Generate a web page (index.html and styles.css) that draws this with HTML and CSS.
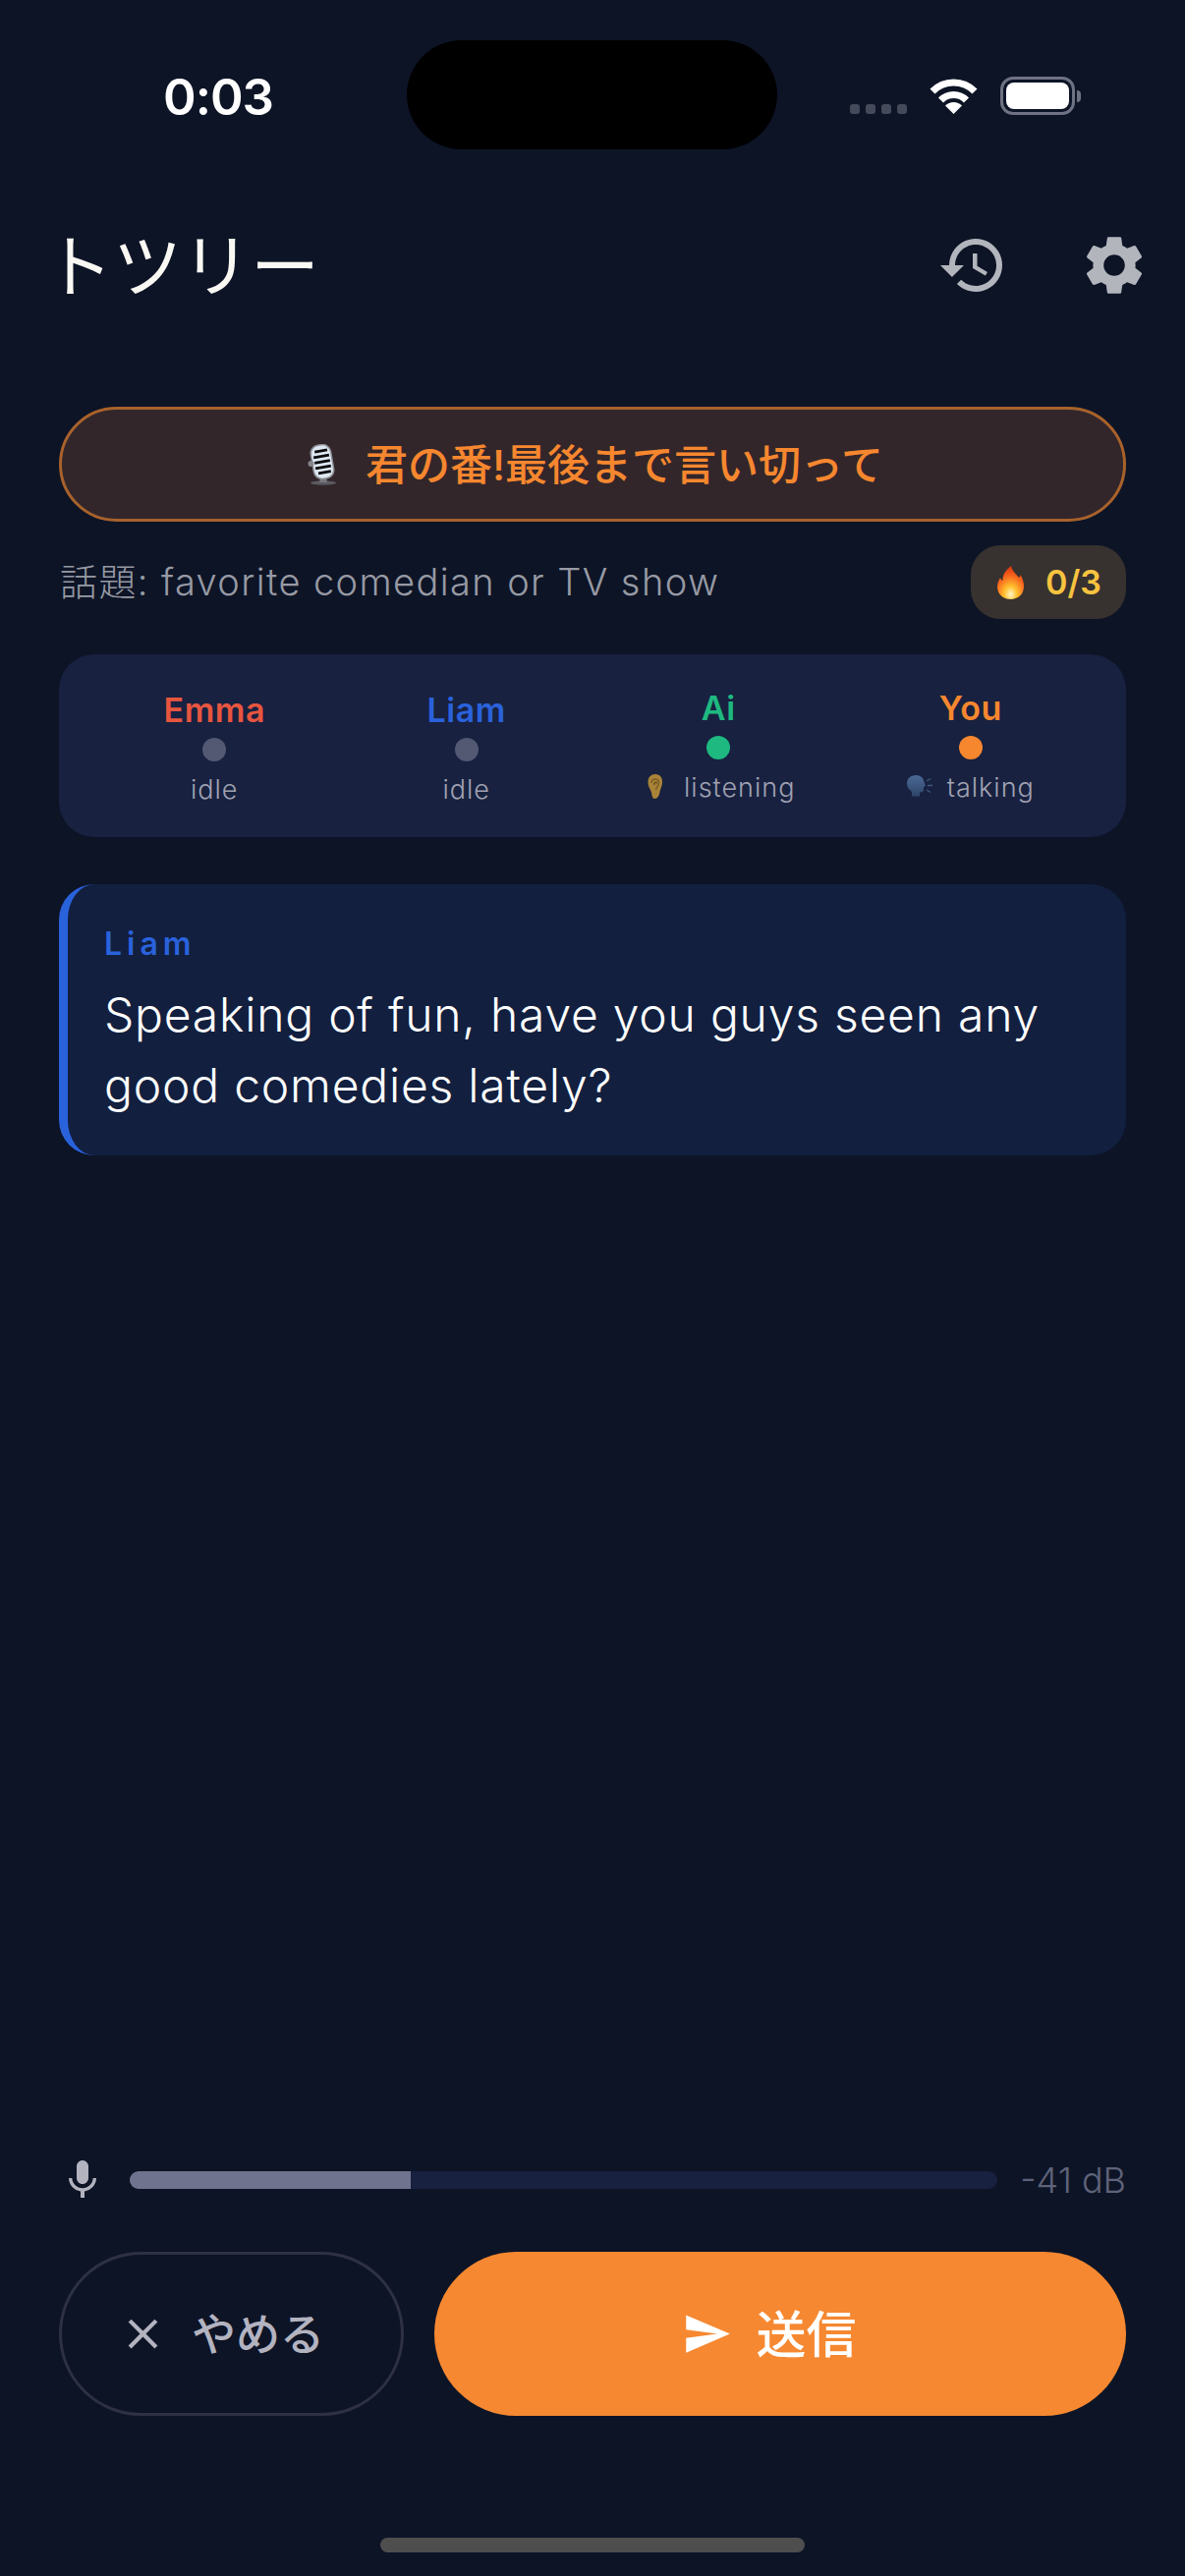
FILE: index.html
```html
<!DOCTYPE html>
<html lang="ja">
<head>
  <meta charset="UTF-8" />
  <title>トツリー</title>
  <link rel="stylesheet" href="styles.css">
</head>
<body>
  <div class="screen">
    <!-- Status bar -->
    <div class="status-bar">
      <div class="status-time">0:03</div>
      <div class="island"></div>
      <div class="status-icons">
        <div class="signal"><span></span><span></span><span></span><span></span></div>
        <svg class="wifi" viewBox="0 0 51 37">
          <path d="M4 14A30 30 0 0 1 47 14" fill="none" stroke="#fff" stroke-width="7"/>
          <path d="M12.5 23A18 18 0 0 1 38.5 23" fill="none" stroke="#fff" stroke-width="7"/>
          <path d="M25.5 37L17 28.5A12 12 0 0 1 34 28.5z" fill="#fff"/>
        </svg>
        <div class="battery"><div class="battery-level"></div></div>
        <div class="battery-cap"></div>
      </div>
    </div>

    <!-- Header -->
    <div class="app-header">
      <div class="app-title">トツリー</div>
      <div class="header-actions">
        <svg class="header-icon" viewBox="0 0 24 24"><path d="M13 3c-4.97 0-9 4.03-9 9H1l3.89 3.89.07.14L9 12H6c0-3.87 3.13-7 7-7s7 3.13 7 7-3.13 7-7 7c-1.93 0-3.68-.79-4.94-2.06l-1.42 1.42C8.27 19.99 10.51 21 13 21c4.97 0 9-4.03 9-9s-4.03-9-9-9zm-1 5v5l4.28 2.54.72-1.21-3.5-2.08V8H12z"/></svg>
        <svg class="header-icon" viewBox="0 0 24 24"><path d="M19.14 12.94c.04-.3.06-.61.06-.94 0-.32-.02-.64-.07-.94l2.03-1.58c.18-.14.23-.41.12-.61l-1.92-3.32c-.12-.22-.37-.29-.59-.22l-2.39.96c-.5-.38-1.03-.7-1.62-.94l-.36-2.54c-.04-.24-.24-.41-.48-.41h-3.84c-.24 0-.43.17-.47.41l-.36 2.54c-.59.24-1.13.57-1.62.94l-2.39-.96c-.22-.08-.47 0-.59.22L2.74 8.87c-.12.21-.08.47.12.61l2.03 1.58c-.05.3-.09.63-.09.94s.02.64.07.94l-2.03 1.58c-.18.14-.23.41-.12.61l1.92 3.32c.12.22.37.29.59.22l2.39-.96c.5.38 1.03.7 1.62.94l.36 2.54c.05.24.24.41.48.41h3.84c.24 0 .44-.17.47-.41l.36-2.54c.59-.24 1.13-.56 1.62-.94l2.39.96c.22.08.47 0 .59-.22l1.92-3.32c.12-.22.07-.47-.12-.61l-2.01-1.58zM12 15.6c-1.98 0-3.6-1.62-3.6-3.6s1.62-3.6 3.6-3.6 3.6 1.62 3.6 3.6-1.62 3.6-3.6 3.6z"/></svg>
      </div>
    </div>

    <div class="content">
      <div class="turn-banner">
        <svg class="mic-emoji" viewBox="0 0 29 42">
          <ellipse cx="16" cy="39.5" rx="13" ry="2.2" fill="#5a5a60"/>
          <path d="M13 34l-1 5h8l-1-5z" fill="#77777c"/>
          <g transform="rotate(-10 15 18)">
            <rect x="4" y="0" width="22" height="36" rx="9" fill="#8c9096"/>
            <rect x="5.500" y="1.500" width="19" height="33" rx="8" fill="#dfe8f2"/>
            <path d="M9 7h13M7 12.500h16M7 18h16M7 23.500h16M9 29h13" stroke="#0b0b0e" stroke-width="2.800"/>
          </g>
          <circle cx="3.500" cy="20" r="3" fill="#84868c"/>
        </svg>
        <span>君の番!最後まで言い切って</span>
      </div>

      <div class="topic-row">
        <div class="topic">話題: favorite comedian or TV show</div>
        <div class="streak">
          <svg class="flame" viewBox="0 0 27 34">
            <defs>
              <radialGradient id="flameFill" cx="0.5" cy="0.85" r="0.8">
                <stop offset="0" stop-color="#fff6c8"/>
                <stop offset="0.3" stop-color="#ffc02e"/>
                <stop offset="0.7" stop-color="#f8641c"/>
                <stop offset="1" stop-color="#dd3a12"/>
              </radialGradient>
            </defs>
            <path d="M14 0c1 5 5 8 8 12 1-1 1.500-2 1.500-3 2.500 4 3.500 8 3.500 12 0 8-6 13-13.500 13S0 29 0 21c0-4 2-7 3-9 .5 1.500 1 2.500 2.500 3C5 9 9 4 14 0z" fill="url(#flameFill)"/>
          </svg>
          <span>0/3</span>
        </div>
      </div>

      <div class="players">
        <div class="player">
          <div class="player-name emma">Emma</div>
          <div class="dot"></div>
          <div class="player-state">idle</div>
        </div>
        <div class="player">
          <div class="player-name liam">Liam</div>
          <div class="dot"></div>
          <div class="player-state">idle</div>
        </div>
        <div class="player active">
          <div class="player-name ai">Ai</div>
          <div class="dot dot-ai"></div>
          <div class="player-state listening">
            <svg class="state-emoji ear" viewBox="0 0 16 25">
              <path d="M8 0C13 0 15.500 4 15 9 14.500 13 13 15 12.500 18 12 22 10 25 7.500 25 5 25 4.500 22 4 19 3.500 16 .5 13 .5 8 .5 3 3.500 0 8 0z" fill="#a98338"/>
              <path d="M4 9C4 4 11 3.500 11.500 8.500 11.500 12 9 13 8.500 16" fill="none" stroke="#7a5c22" stroke-width="1.400"/>
              <path d="M6.500 11C6.500 8 9 7.500 9.500 9.500" fill="none" stroke="#6b4e1b" stroke-width="1.400"/>
            </svg>
            <span>listening</span>
          </div>
        </div>
        <div class="player active">
          <div class="player-name you">You</div>
          <div class="dot dot-you"></div>
          <div class="player-state">
            <svg class="state-emoji head" viewBox="0 0 26 22">
              <defs>
                <linearGradient id="headFill" x1="0" y1="0" x2="0" y2="1">
                  <stop offset="0" stop-color="#4b6a96"/>
                  <stop offset="1" stop-color="#2f4468"/>
                </linearGradient>
              </defs>
              <path d="M9 0C14 0 17 3 17.500 7L19 11 17 12V15C17 17 15 17.500 13 17.500V21.500H5V17C2 15 0 12 0 8.500 0 3.500 4 0 9 0z" fill="url(#headFill)"/>
              <path d="M20 6l4-2.500M21 10.500h5M20 15l4 2.500" stroke="#41597f" stroke-width="1.400"/>
            </svg>
            <span>talking</span>
          </div>
        </div>
      </div>

      <div class="message">
        <div class="message-author">Liam</div>
        <div class="message-text">Speaking of fun, have you guys seen any good comedies lately?</div>
      </div>
    </div>

    <!-- Footer controls -->
    <div class="controls">
      <div class="meter-row">
        <svg class="meter-mic" viewBox="0 0 24 24"><path d="M12 14c1.660 0 2.990-1.340 2.990-3L15 5c0-1.660-1.340-3-3-3S9 3.340 9 5v6c0 1.660 1.340 3 3 3zm5.300-3c0 3-2.540 5.100-5.300 5.100S6.700 14 6.700 11H5c0 3.410 2.720 6.230 6 6.720V21h2v-3.280c3.280-.48 6-3.300 6-6.720h-1.700z"/></svg>
        <div class="meter"><div class="meter-fill" style="width: 32.4%"></div></div>
        <div class="meter-value">-41 dB</div>
      </div>
      <div class="buttons">
        <button class="btn-cancel">
          <svg viewBox="0 0 24 24"><path d="M19 6.410L17.590 5 12 10.590 6.410 5 5 6.410 10.590 12 5 17.590 6.410 19 12 13.410 17.590 19 19 17.590 13.410 12z"/></svg>
          <span>やめる</span>
        </button>
        <button class="btn-send">
          <svg viewBox="0 0 24 24"><path d="M2.010 21L23 12 2.010 3 2 10l15 2-15 2z"/></svg>
          <span>送信</span>
        </button>
      </div>
    </div>

    <div class="home-bar"></div>
  </div>
</body>
</html>
```

FILE: styles.css
```css
* {
  box-sizing: border-box;
}
body {
  margin: 0;
  background-color: #0d1426;
  font-family: Inter, "Noto Sans CJK JP", sans-serif;
  color: #fff;
}
.screen {
  width: 1206px;
  height: 2622px;
  display: flex;
  flex-direction: column;
  overflow: hidden;
}

/* Status bar */
.status-bar {
  display: flex;
  padding-top: 41px;
  height: 152px;
}
.status-time {
  width: 414px;
  padding: 2px 0 0 30px;
  text-align: center;
  font-size: 51px;
  font-weight: 600;
  line-height: 111px;
  letter-spacing: -1px;
}
.island {
  width: 377px;
  height: 111px;
  background: #000;
  border-radius: 56px;
}
.status-icons {
  flex: 1;
  display: flex;
  align-items: flex-start;
  padding-left: 74px;
}
.signal {
  display: flex;
  gap: 6px;
  margin-top: 65px;
}
.signal span {
  width: 10px;
  height: 10px;
  border-radius: 3px;
  background: #454a5b;
}
.wifi {
  width: 51px;
  height: 37px;
  margin: 38px 0 0 22px;
}
.battery {
  width: 76px;
  height: 39px;
  margin: 37px 0 0 22px;
  padding: 3px;
  border: 3px solid #6f7282;
  border-radius: 13px;
}
.battery-level {
  height: 100%;
  background: #fff;
  border-radius: 8px;
}
.battery-cap {
  width: 4px;
  height: 12px;
  margin: 51px 0 0 2px;
  background: #6f7282;
  border-radius: 0 4px 4px 0;
}

/* Header */
.app-header {
  display: flex;
  justify-content: space-between;
  align-items: center;
  margin-top: 82px;
  height: 72px;
  padding: 0 36px 0 45px;
}
.app-title {
  margin-top: -8px;
  font-size: 70px;
  font-weight: 400;
  color: #faf8f3;
}
.header-actions {
  display: flex;
  gap: 72px;
}
.header-icon {
  width: 72px;
  height: 72px;
  fill: #b3b5bd;
}

/* Main content */
.content {
  padding: 0 60px;
}
.turn-banner {
  display: flex;
  align-items: center;
  justify-content: center;
  gap: 30px;
  margin-top: 108px;
  height: 117px;
  padding: 0 0 5px 6px;
  background: #32262b;
  border: 3px solid #a8622b;
  border-radius: 60px;
  color: #f6872f;
  font-size: 43px;
  font-weight: 500;
}
.mic-emoji {
  width: 29px;
  height: 42px;
  margin-top: 5px;
}
.topic-row {
  display: flex;
  justify-content: space-between;
  align-items: center;
  margin-top: 24px;
  height: 75px;
}
.topic {
  margin: -6px 0 0 1px;
  font-size: 38px;
  font-weight: 300;
  letter-spacing: 1.4px;
  color: #979aa4;
}
.streak {
  display: flex;
  align-items: center;
  gap: 22px;
  width: 158px;
  height: 75px;
  padding-left: 27px;
  background: #37322f;
  border-radius: 30px;
  color: #f8c340;
  font-size: 34px;
  font-weight: 600;
}
.flame {
  width: 27px;
  height: 34px;
}
.players {
  display: grid;
  grid-template-columns: repeat(4, 1fr);
  margin-top: 36px;
  height: 186px;
  padding: 35px 30px 0;
  background: #182140;
  border-radius: 36px;
}
.player {
  display: flex;
  flex-direction: column;
  align-items: center;
}
.player.active {
  margin-top: -2px;
}
.player-name {
  font-size: 34px;
  font-weight: 600;
  letter-spacing: 0.5px;
  line-height: 44px;
}
.emma { color: #e8553f; }
.liam { color: #2a62dc; }
.ai { color: #1eb980; }
.you { color: #f6872f; }
.dot {
  width: 24px;
  height: 24px;
  margin-top: 6px;
  border-radius: 50%;
  background: #535873;
}
.dot-ai { background: #1eb980; }
.dot-you { background: #f6872f; }
.player-state {
  display: flex;
  align-items: center;
  gap: 15px;
  margin-top: 6px;
  font-size: 27px;
  font-weight: 300;
  line-height: 46px;
  letter-spacing: 1px;
  color: #a0a2b2;
}
.listening {
  gap: 21px;
  padding-left: 6px;
}
.state-emoji {
  margin-top: -4px;
}
.ear {
  width: 16px;
  height: 25px;
}
.head {
  width: 26px;
  height: 22px;
}
.message {
  margin-top: 48px;
  height: 276px;
  padding: 41px 40px 0 37px;
  background: #121f3f;
  border-left: 9px solid #2a62dc;
  border-radius: 36px;
}
.message-author {
  font-size: 32px;
  font-weight: 600;
  letter-spacing: 5px;
  line-height: 40px;
  color: #2a62dc;
}
.message-text {
  margin-top: 16px;
  font-size: 48px;
  font-weight: 350;
  line-height: 72px;
  letter-spacing: 0.78px;
  color: #fff;
}

/* Footer controls */
.controls {
  margin-top: auto;
  padding: 0 60px;
}
.meter-row {
  display: flex;
  align-items: center;
  height: 48px;
}
.meter-mic {
  width: 48px;
  height: 48px;
  flex-shrink: 0;
  fill: #b3b3c0;
}
.meter {
  flex: 1;
  height: 18px;
  margin-left: 24px;
  background: #18213f;
  border-radius: 9px;
  overflow: hidden;
}
.meter-fill {
  height: 100%;
  background: #70738e;
}
.meter-value {
  width: 131px;
  text-align: right;
  font-size: 36px;
  font-weight: 300;
  color: #5f637a;
}
.buttons {
  display: flex;
  gap: 31px;
  margin-top: 49px;
}
.buttons button {
  display: flex;
  align-items: center;
  height: 167px;
  border-radius: 84px;
  font-family: inherit;
  cursor: pointer;
}
.btn-cancel {
  width: 351px;
  gap: 24px;
  padding: 0 0 0 57px;
  background: transparent;
  border: 3px solid #2d3142;
  color: #b3b3c0;
  font-size: 45px;
  font-weight: 500;
}
.btn-cancel span {
  margin-top: -5px;
}
.btn-cancel svg {
  width: 51px;
  height: 51px;
  fill: #b3b3c0;
}
.btn-send {
  flex: 1;
  justify-content: center;
  gap: 24px;
  padding: 0 22px 0 0;
  background: #f68831;
  border: none;
  color: #fff;
  font-size: 51px;
  font-weight: 500;
}
.btn-send span {
  margin-top: -5px;
}
.btn-send svg {
  width: 51px;
  height: 51px;
  fill: #fff;
}
.home-bar {
  width: 432px;
  height: 15px;
  margin: 124px auto 24px;
  background: #4e4e4e;
  border-radius: 8px;
}
```
